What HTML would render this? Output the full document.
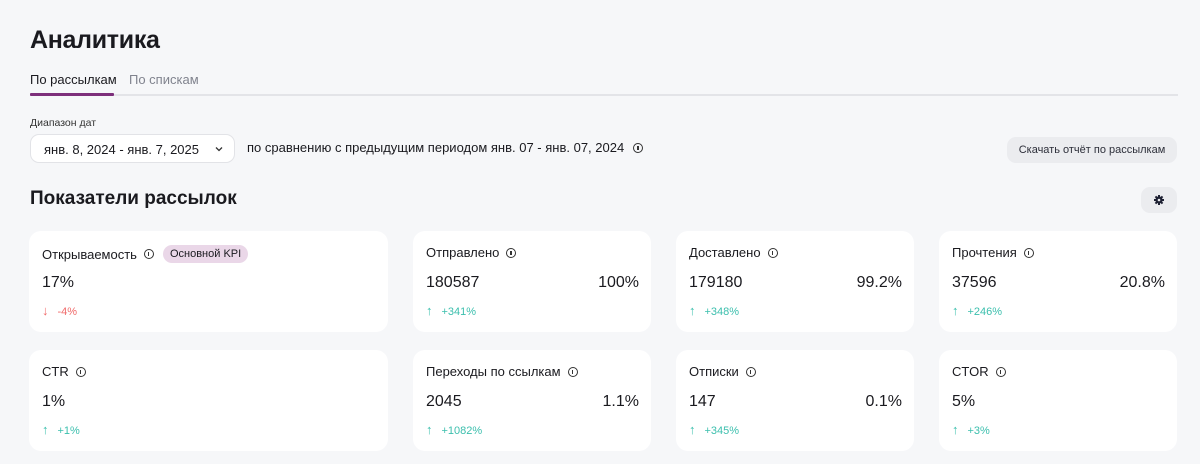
<!DOCTYPE html>
<html><head><meta charset="utf-8"><style>
*{box-sizing:border-box;margin:0;padding:0}
body{width:1200px;height:464px;background:#f6f7f9;font-family:"Liberation Sans","DejaVu Sans",sans-serif;color:#1a1a1f;position:relative;overflow:hidden}
.abs{position:absolute}
h1{position:absolute;left:30px;top:26px;font-size:25px;font-weight:bold;letter-spacing:-0.3px}
.tab{position:absolute;top:72px;font-size:13px}
.line{position:absolute;left:30px;top:94px;width:1148px;height:2px;background:#e3e4e8}
.uline{position:absolute;left:30px;top:93px;width:84px;height:3px;background:#7d2f7b;border-radius:1px}
.dd{position:absolute;left:30px;top:134px;width:205px;height:29px;background:#fff;border:1px solid #e2e3e7;border-radius:9px;font-size:13px;padding:7px 0 0 13px}
.btn{position:absolute;background:#ebecef;border-radius:9px;font-size:11px;color:#2d2f3a}
.card{position:absolute;background:#fff;border-radius:12px}
.lbl{position:absolute;left:13px;top:14px;font-size:13px;display:flex;align-items:center}
.i{display:inline-block;width:10px;height:10px;border:1.3px solid #333;border-radius:50%;margin-left:7px;position:relative}
.i:after{content:"";position:absolute;left:3px;top:2px;width:1.3px;height:4px;background:#333}
.v{position:absolute;left:13px;top:43px;font-size:16px}
.p{position:absolute;right:12px;top:43px;font-size:16px}
.c{position:absolute;left:13px;top:72px;font-size:11px;color:#3bbfad}
.c.r{color:#f06a6a}
.c b{font-weight:normal;margin-right:9px;font-size:13px}
.kpi{background:#ead7e8;border-radius:9px;font-size:11px;padding:3px 7px;margin-left:9px}
</style></head><body>
<h1>Аналитика</h1>
<div class="tab" style="left:30px">По рассылкам</div>
<div class="tab" style="left:129px;color:#80838e">По спискам</div>
<div class="line"></div><div class="uline"></div>
<div class="abs" style="left:30px;top:117px;font-size:10.5px;color:#333">Диапазон дат</div>
<div class="dd">янв. 8, 2024 - янв. 7, 2025<svg class="abs" style="right:11px;top:11px" width="8" height="6" viewBox="0 0 8 6"><path d="M1 1.5 L4 4.5 L7 1.5" stroke="#333" stroke-width="1.3" fill="none"/></svg></div>
<div class="abs" style="left:247px;top:140px;font-size:13px;display:flex;align-items:center">по сравнению с предыдущим периодом янв. 07 - янв. 07, 2024<span class="i" style="margin-left:9px"></span></div>
<div class="btn" style="left:1007px;top:137px;width:170px;height:26px;line-height:26px;text-align:center">Скачать отчёт по рассылкам</div>
<div class="abs" style="left:30px;top:188px;font-size:19px;font-weight:bold">Показатели рассылок</div>
<div class="btn" style="left:1141px;top:187px;width:36px;height:26px"><svg class="abs" style="left:13px;top:8px" width="10" height="10" viewBox="0 0 10 10"><g fill="#1e2133"><circle cx="5" cy="5" r="3.6"/><rect x="4" y="0" width="2" height="10"/><rect x="0" y="4" width="10" height="2"/><rect x="4" y="0" width="2" height="10" transform="rotate(45 5 5)"/><rect x="4" y="0" width="2" height="10" transform="rotate(-45 5 5)"/></g><circle cx="5" cy="5" r="1.3" fill="#ebecef"/></svg></div>

<div class="card" style="left:29px;top:231px;width:359px;height:101px"><div class="lbl">Открываемость<span class="i"></span><span class="kpi">Основной KPI</span></div><div class="v">17%</div><div class="c r"><b>&#8595;</b>-4%</div></div>
<div class="card" style="left:413px;top:231px;width:238px;height:101px"><div class="lbl">Отправлено<span class="i"></span></div><div class="v">180587</div><div class="p">100%</div><div class="c"><b>&#8593;</b>+341%</div></div>
<div class="card" style="left:676px;top:231px;width:238px;height:101px"><div class="lbl">Доставлено<span class="i"></span></div><div class="v">179180</div><div class="p">99.2%</div><div class="c"><b>&#8593;</b>+348%</div></div>
<div class="card" style="left:939px;top:231px;width:238px;height:101px"><div class="lbl">Прочтения<span class="i"></span></div><div class="v">37596</div><div class="p">20.8%</div><div class="c"><b>&#8593;</b>+246%</div></div>

<div class="card" style="left:29px;top:350px;width:359px;height:101px"><div class="lbl">CTR<span class="i"></span></div><div class="v">1%</div><div class="c"><b>&#8593;</b>+1%</div></div>
<div class="card" style="left:413px;top:350px;width:238px;height:101px"><div class="lbl">Переходы по ссылкам<span class="i"></span></div><div class="v">2045</div><div class="p">1.1%</div><div class="c"><b>&#8593;</b>+1082%</div></div>
<div class="card" style="left:676px;top:350px;width:238px;height:101px"><div class="lbl">Отписки<span class="i"></span></div><div class="v">147</div><div class="p">0.1%</div><div class="c"><b>&#8593;</b>+345%</div></div>
<div class="card" style="left:939px;top:350px;width:238px;height:101px"><div class="lbl">CTOR<span class="i"></span></div><div class="v">5%</div><div class="c"><b>&#8593;</b>+3%</div></div>
</body></html>
